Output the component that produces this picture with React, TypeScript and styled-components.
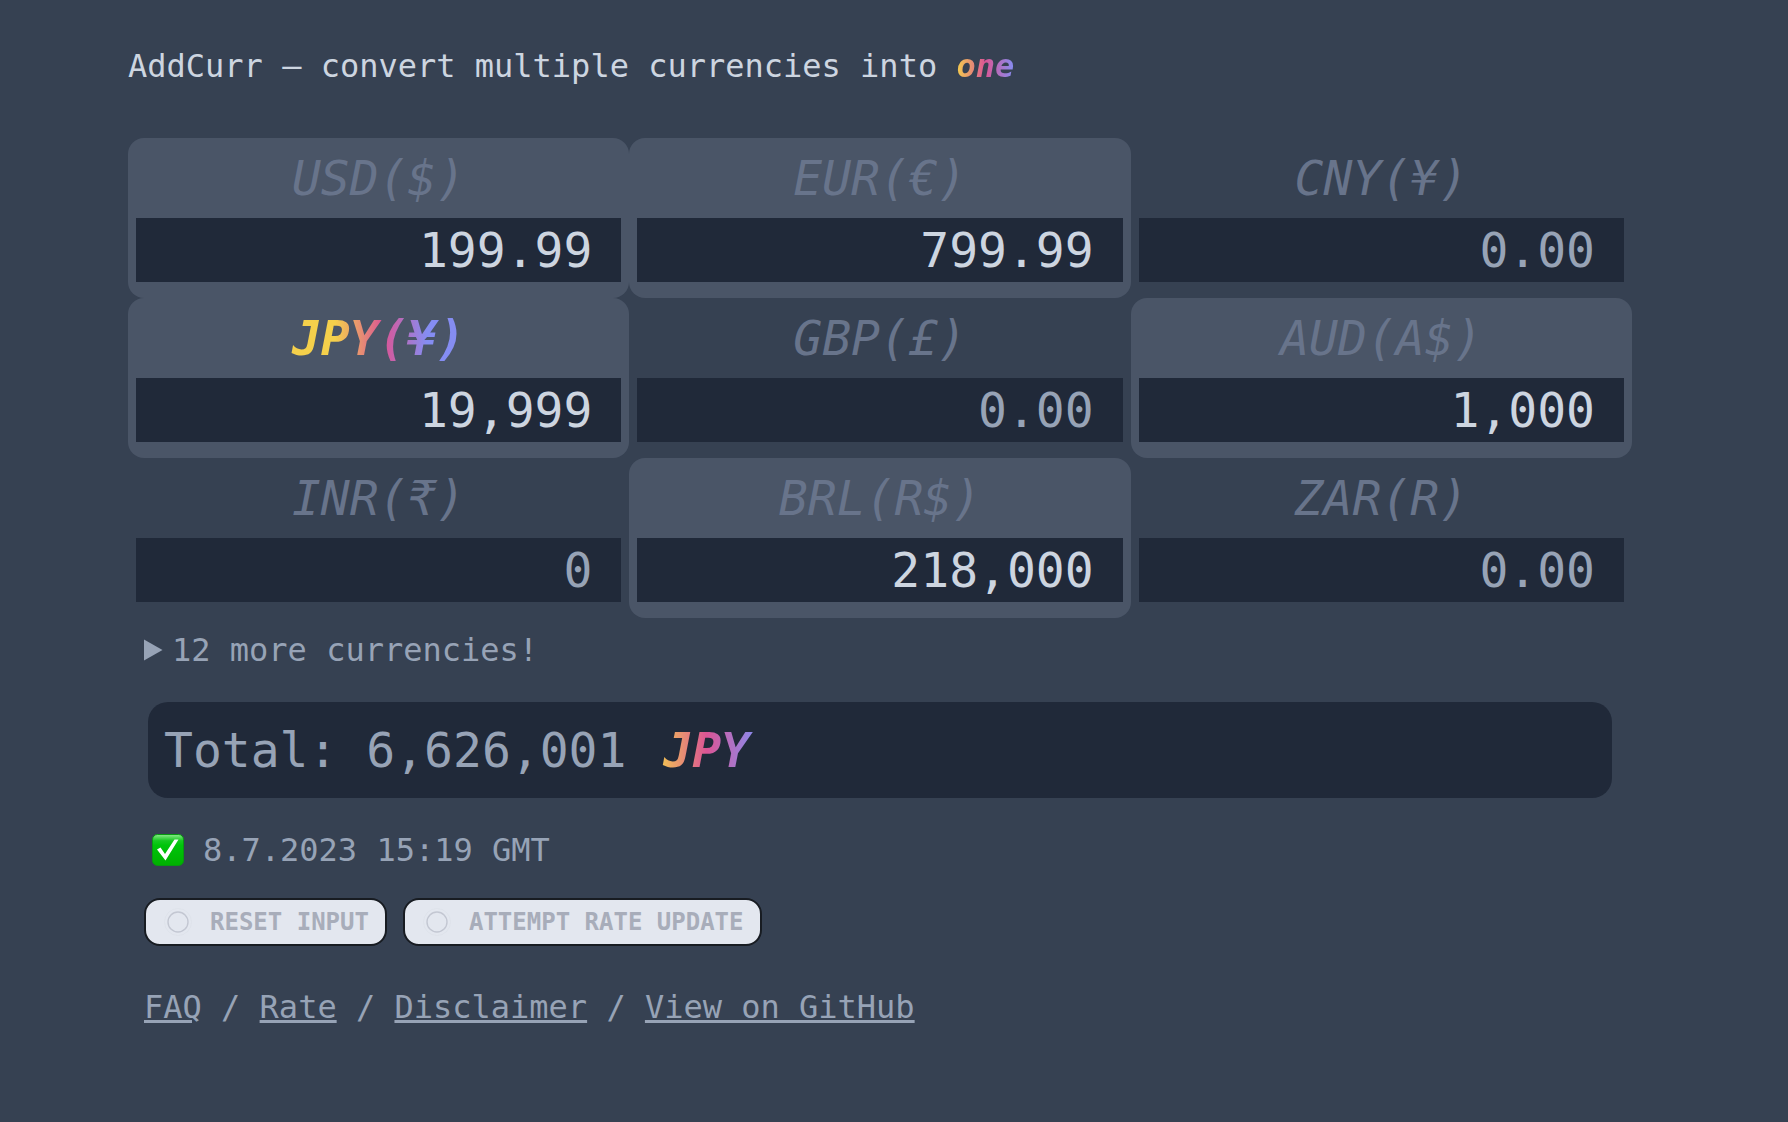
import React, { useState } from "react";
import styled, { createGlobalStyle, css } from "styled-components";

const colors = {
  page: "#364152",
  card: "#4a5567",
  field: "#202939",
  label: "#68748b",
  muted: "#97a3b6",
  bright: "#cdd5e0",
};

const GlobalStyle = createGlobalStyle`
  *, *::before, *::after { box-sizing: border-box; }
  body {
    margin: 0;
    min-height: 100vh;
    background: ${colors.page};
    color: ${colors.muted};
    font-family: Menlo, "DejaVu Sans Mono", monospace;
    font-size: 32px;
    line-height: 48px;
  }
`;

const rainbow = css`
  background-image: linear-gradient(to right, #f5d04b, #db5595, #858df2);
  background-clip: text;
  -webkit-background-clip: text;
  color: transparent;
  font-weight: 700;
  font-style: italic;
`;

const Page = styled.div`
  padding: 42px 156px 64px 128px;
`;

const Title = styled.h1`
  margin: 0 0 48px;
  font-size: 32px;
  font-weight: 400;
  color: ${colors.bright};
`;

const Accent = styled.em<{ $padded?: boolean }>`
  ${rainbow}
  padding: 0 ${(p) => (p.$padded ? 8 : 0)}px;
`;

const Grid = styled.div`
  display: grid;
  grid-template-columns: repeat(3, minmax(0, 1fr));
`;

const Card = styled.div<{ $active: boolean }>`
  display: flex;
  flex-direction: column;
  padding: 0 8px 16px;
  border-radius: 16px;
  background: ${(p) => (p.$active ? colors.card : "transparent")};
`;

const CardLabel = styled.label<{ $selected: boolean }>`
  font-size: 48px;
  line-height: 80px;
  font-style: italic;
  text-align: center;
  white-space: nowrap;
  color: ${colors.label};
  ${(p) =>
    p.$selected &&
    css`
      ${rainbow}
      background-image: linear-gradient(to right, #f5d04b 41%, #db5595 51%, #858df2 60%);
    `}
`;

const Amount = styled.input<{ $active: boolean }>`
  width: 100%;
  height: 64px;
  padding: 0 29px;
  border: 0;
  border-radius: 0;
  outline-offset: -2px;
  background: ${colors.field};
  color: ${(p) => (p.$active ? colors.bright : colors.muted)};
  font: inherit;
  font-size: 48px;
  line-height: 64px;
  text-align: right;
`;

const More = styled.details`
  padding: 8px 16px 0;
`;

const Summary = styled.summary`
  display: flex;
  align-items: center;
  gap: 9px;
  cursor: pointer;
  list-style: none;
`;

const Triangle = styled.svg`
  width: 19px;
  height: 22px;
  fill: currentColor;
`;

const Total = styled.output`
  display: block;
  margin: 28px 20px 0;
  padding: 0 16px;
  border-radius: 20px;
  background: ${colors.field};
  font-size: 48px;
  line-height: 96px;
`;

const Status = styled.p`
  display: flex;
  align-items: center;
  gap: 19px;
  margin: 28px 24px 0;
`;

const Check = styled.svg`
  width: 32px;
  height: 32px;
`;

const Actions = styled.div`
  display: flex;
  gap: 16px;
  margin: 24px 16px 0;
`;

const Button = styled.button`
  display: flex;
  align-items: center;
  gap: 14px;
  height: 48px;
  padding: 0 16px;
  border: 2px solid #181c22;
  border-radius: 16px;
  background: #e3e7ef;
  color: #a8adba;
  font: inherit;
  font-size: 24px;
  font-weight: 700;
  line-height: 44px;
  text-transform: uppercase;
`;

const Ring = styled.svg`
  width: 34px;
  height: 32px;
  fill: none;
  stroke: #c3c7d2;
`;

const Links = styled.nav`
  margin: 37px 16px 0;
`;

const Link = styled.a`
  color: inherit;
  text-decoration-thickness: 3px;
  text-underline-offset: 2px;
`;

type Currency = { code: string; symbol: string; value: string };

const initial: Currency[] = [
  { code: "USD", symbol: "$", value: "199.99" },
  { code: "EUR", symbol: "€", value: "799.99" },
  { code: "CNY", symbol: "¥", value: "0.00" },
  { code: "JPY", symbol: "¥", value: "19,999" },
  { code: "GBP", symbol: "£", value: "0.00" },
  { code: "AUD", symbol: "A$", value: "1,000" },
  { code: "INR", symbol: "₹", value: "0" },
  { code: "BRL", symbol: "R$", value: "218,000" },
  { code: "ZAR", symbol: "R", value: "0.00" },
];

const links = ["FAQ", "Rate", "Disclaimer", "View on GitHub"];

function RingIcon() {
  return (
    <Ring viewBox="0 0 34 32" aria-hidden="true">
      <circle cx="16" cy="16" r="10" strokeWidth="1.4" />
      <circle cx="16" cy="16" r="13.5" strokeWidth="0.6" opacity="0.25" />
    </Ring>
  );
}

export default function App() {
  const [rows, setRows] = useState(initial);
  const base = "JPY";

  const update = (code: string, value: string) =>
    setRows(rows.map((r) => (r.code === code ? { ...r, value } : r)));

  return (
    <>
      <GlobalStyle />
      <Page>
        <Title>
          AddCurr – convert multiple currencies into <Accent>one</Accent>
        </Title>
        <Grid>
          {rows.map((r) => {
            const active = parseFloat(r.value.replace(/,/g, "")) > 0;
            return (
              <Card key={r.code} $active={active}>
                <CardLabel htmlFor={r.code} $selected={r.code === base}>
                  {r.code}({r.symbol})
                </CardLabel>
                <Amount
                  id={r.code}
                  inputMode="decimal"
                  $active={active}
                  value={r.value}
                  onChange={(e) => update(r.code, e.target.value)}
                />
              </Card>
            );
          })}
        </Grid>
        <More>
          <Summary>
            <Triangle viewBox="0 0 19 22" aria-hidden="true">
              <path d="M0 0.5 L18.5 11 L0 21.5 Z" />
            </Triangle>
            12 more currencies!
          </Summary>
        </More>
        <Total>
          Total: 6,626,001 <Accent $padded>{base}</Accent>
        </Total>
        <Status>
          <Check viewBox="0 0 32 32" aria-hidden="true">
            <defs>
              <linearGradient id="green" x1="0" y1="0" x2="0" y2="1">
                <stop offset="0" stopColor="#8bea8b" />
                <stop offset="0.2" stopColor="#16c820" />
                <stop offset="0.35" stopColor="#00c40a" />
                <stop offset="1" stopColor="#00b000" />
              </linearGradient>
            </defs>
            <rect x="0.5" y="0.5" width="31" height="31" rx="5" fill="url(#green)" stroke="#079a10" />
            <path d="M5 15.5 L8.5 13.5 L13 20 L22.5 5.5 L26.5 5.5 L13.5 26.5 Z" fill="#fff" />
          </Check>
          8.7.2023 15:19 GMT
        </Status>
        <Actions>
          <Button type="button" onClick={() => setRows(initial)}>
            <RingIcon />
            Reset input
          </Button>
          <Button type="button">
            <RingIcon />
            Attempt rate update
          </Button>
        </Actions>
        <Links>
          {links.map((name, i) => (
            <React.Fragment key={name}>
              {i > 0 && " / "}
              <Link href="#">{name}</Link>
            </React.Fragment>
          ))}
        </Links>
      </Page>
    </>
  );
}
